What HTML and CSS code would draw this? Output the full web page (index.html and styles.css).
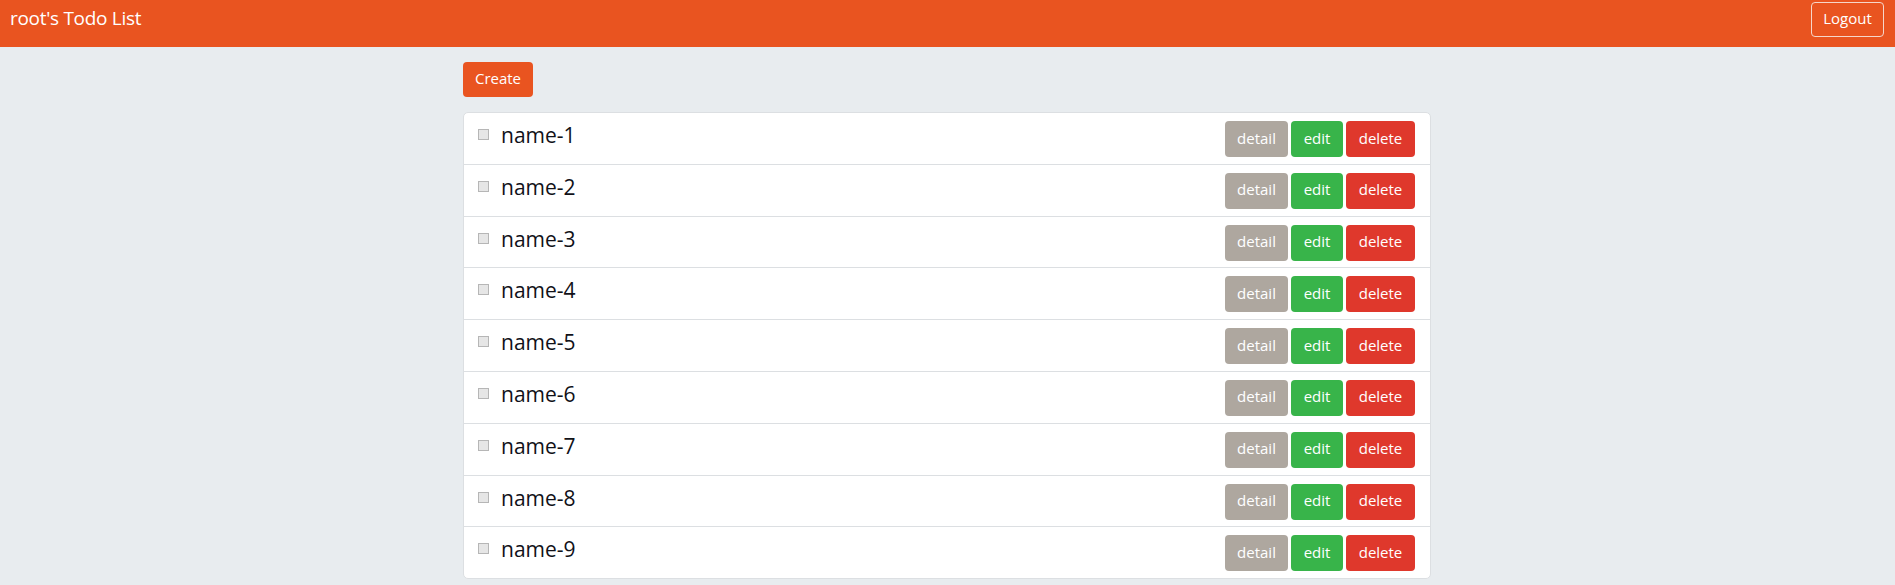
FILE: index.html
```html
<!DOCTYPE html>
<html>
<head>
<meta charset="utf-8">
<title>root's Todo List</title>
<link rel="stylesheet" href="styles.css">
</head>
<body>
<header class="navbar">
  <span class="brand">root's Todo List</span>
  <button class="btn btn-outline">Logout</button>
</header>
<main class="container">
  <div class="toolbar"><button class="btn btn-primary">Create</button></div>
  <ul class="list">
    <li class="item"><span class="check"></span><span class="name">name-1</span><span class="actions"><button class="btn btn-secondary">detail</button><button class="btn btn-success">edit</button><button class="btn btn-danger">delete</button></span></li>
    <li class="item"><span class="check"></span><span class="name">name-2</span><span class="actions"><button class="btn btn-secondary">detail</button><button class="btn btn-success">edit</button><button class="btn btn-danger">delete</button></span></li>
    <li class="item"><span class="check"></span><span class="name">name-3</span><span class="actions"><button class="btn btn-secondary">detail</button><button class="btn btn-success">edit</button><button class="btn btn-danger">delete</button></span></li>
    <li class="item"><span class="check"></span><span class="name">name-4</span><span class="actions"><button class="btn btn-secondary">detail</button><button class="btn btn-success">edit</button><button class="btn btn-danger">delete</button></span></li>
    <li class="item"><span class="check"></span><span class="name">name-5</span><span class="actions"><button class="btn btn-secondary">detail</button><button class="btn btn-success">edit</button><button class="btn btn-danger">delete</button></span></li>
    <li class="item"><span class="check"></span><span class="name">name-6</span><span class="actions"><button class="btn btn-secondary">detail</button><button class="btn btn-success">edit</button><button class="btn btn-danger">delete</button></span></li>
    <li class="item"><span class="check"></span><span class="name">name-7</span><span class="actions"><button class="btn btn-secondary">detail</button><button class="btn btn-success">edit</button><button class="btn btn-danger">delete</button></span></li>
    <li class="item"><span class="check"></span><span class="name">name-8</span><span class="actions"><button class="btn btn-secondary">detail</button><button class="btn btn-success">edit</button><button class="btn btn-danger">delete</button></span></li>
    <li class="item"><span class="check"></span><span class="name">name-9</span><span class="actions"><button class="btn btn-secondary">detail</button><button class="btn btn-success">edit</button><button class="btn btn-danger">delete</button></span></li>
  </ul>
</main>
</body>
</html>
```
FILE: styles.css
```css
* { box-sizing: border-box; }
html, body { margin: 0; padding: 0; }
body {
  background: #e8ecef;
  font-family: "Open Sans", "Noto Sans", sans-serif;
  color: #212529;
}
.navbar {
  height: 47px;
  background: #e95420;
  display: flex;
  justify-content: space-between;
  align-items: flex-start;
  padding: 0 11px 0 10px;
}
.brand {
  color: #fff;
  font-size: 19px;
  line-height: 36px;
  letter-spacing: -0.3px;
}
.btn {
  border: 1px solid transparent;
  border-radius: 4px;
  color: #fff;
  font-family: inherit;
  font-size: 15px;
  line-height: 22px;
  padding: 0 0 3px;
  height: 36px;
  cursor: pointer;
}
.btn-outline {
  margin-top: 2px;
  height: 35px;
  width: 73px;
  background: transparent;
  border-color: #f6d6ca;
}
.container {
  width: 968px;
  margin: 0 0 0 calc(50% - 484.5px);
}
.toolbar { padding-top: 15px; }
.btn-primary { background: #e95420; width: 70px; height: 35px; }
.btn-secondary { background: #aea79f; width: 63px; }
.btn-success { background: #38b44a; width: 52px; }
.btn-danger { background: #df382c; width: 69px; }
.list {
  list-style: none;
  margin: 15px 0 0;
  padding: 0;
  background: #fff;
  border: 1px solid #dcdfe2;
  border-radius: 5px;
}
.item {
  display: flex;
  align-items: flex-start;
  padding: 8px 15px 6.8px 14px;
  border-top: 1px solid #dcdfe2;
}
.item:first-child { border-top: none; }
.check {
  width: 11px;
  height: 11px;
  margin-top: 8px;
  border: 1px solid #b6b6b6;
  background: #e6e6e6;
  flex: none;
}
.name {
  margin: 2px 0 0 12px;
  font-size: 21px;
  line-height: 24px;
  color: #111118;
  flex: 1;
}
.actions { display: flex; gap: 3px; }
```
